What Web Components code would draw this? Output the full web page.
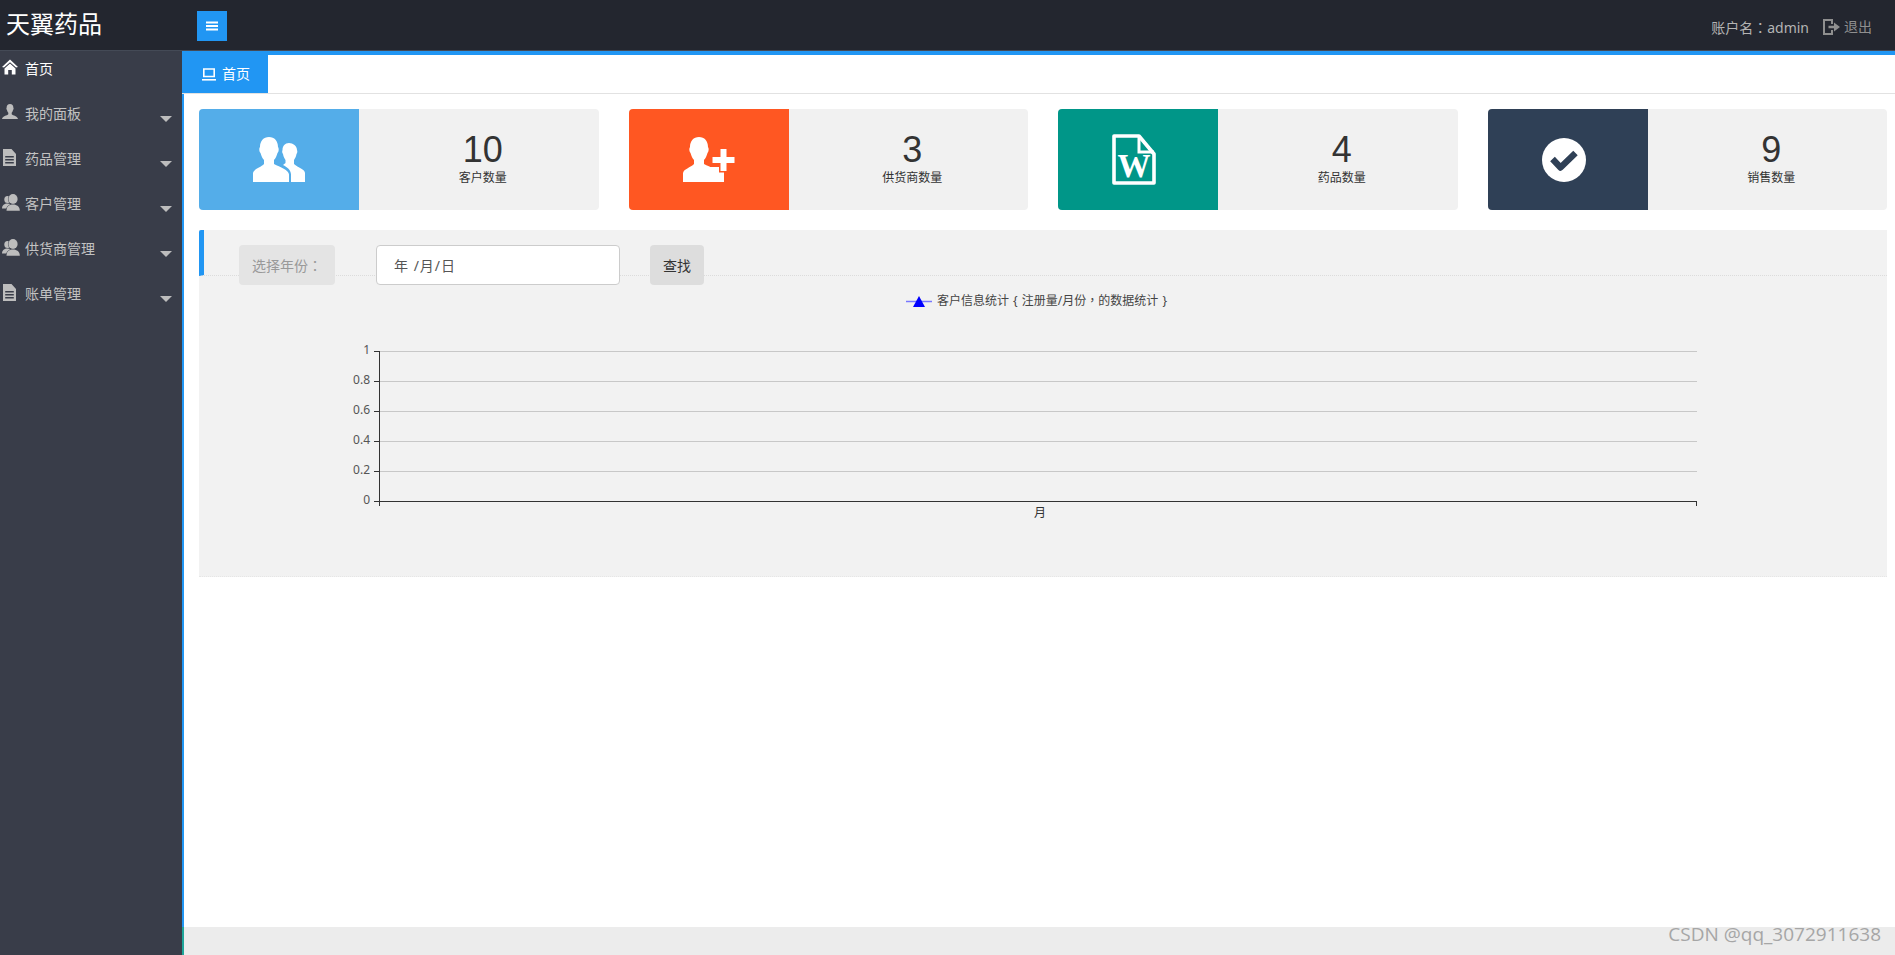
<!DOCTYPE html>
<html lang="zh-CN">
<head>
<meta charset="utf-8">
<title>天翼药品</title>
<style>
	html, body { margin: 0; height: 100%; overflow: hidden; }
	body { font-family: "Noto Sans", "Noto Sans CJK SC", sans-serif; font-size: 14px; color: #333; }
</style>
</head>
<body>

<app-shell>
	<top-bar slot="top" brand="天翼药品" user="账户名"></top-bar>

	<side-item slot="side" icon="home" active>首页</side-item>
	<side-item slot="side" icon="user" arrow>我的面板</side-item>
	<side-item slot="side" icon="doc" arrow>药品管理</side-item>
	<side-item slot="side" icon="users" arrow>客户管理</side-item>
	<side-item slot="side" icon="users" arrow>供货商管理</side-item>
	<side-item slot="side" icon="doc" arrow>账单管理</side-item>

	<tab-strip slot="tabs">首页</tab-strip>

	<stat-grid>
		<stat-card value="10" color="#54ade9" icon="people">客户数量</stat-card>
		<stat-card value="3" color="#ff5722" icon="adduser">供货商数量</stat-card>
		<stat-card value="4" color="#009688" icon="word">药品数量</stat-card>
		<stat-card value="9" color="#2f4056" icon="check">销售数量</stat-card>
	</stat-grid>

	<chart-panel></chart-panel>
</app-shell>

<script>
const sideIcons = {
	home: '<path d="M8 0.5 L16 8 L14 8.5 L8 3.2 L2 8.5 L0 8 Z M8 4.6 L13.5 9.4 V15.5 H9.8 V11 H6.2 V15.5 H2.5 V9.4 Z"/>',
	user: '<path d="M8 0 C5.8 0 4.6 1.6 4.6 3.8 C4.2 4.3 4.4 5.6 5 6 C5.3 7.4 5.8 8.2 6.3 8.8 V10.2 C5 11.6 0.5 12 0 15 H16 C15.5 12 11 11.6 9.7 10.2 V8.8 C10.2 8.2 10.7 7.4 11 6 C11.6 5.6 11.8 4.3 11.4 3.8 C11.4 1.6 10.2 0 8 0 Z"/>',
	doc: '<path fill-rule="evenodd" d="M1 0 H9.5 L14 5 V17 H1 Z M3.2 7 V8.4 H11.8 V7 Z M3.2 10 V11.4 H11.8 V10 Z M3.2 13 V14.4 H11.8 V13 Z"/>',
	users: '<ellipse cx="5.5" cy="5.5" rx="3.2" ry="3.6"/><path d="M0 14.5 C0 11 2.5 9.5 5.5 9.5 C8.5 9.5 10 11 10 14.5 Z"/><g stroke="#393d49" stroke-width="1" paint-order="stroke"><ellipse cx="11" cy="5" rx="4.6" ry="5"/><path d="M4.5 16.8 C4.5 12.5 7 10.4 11 10.4 C15 10.4 17.8 12.5 17.8 16.8 Z"/></g>'
}

const bigPerson = 'M16 0 C10.5 0 7 4 7 10 C6 11 6 14.5 7.5 16 C8.5 19.5 9.5 21.5 11 23 V27 C8 30.5 0 32 0 36.5 V45 H36 V37.5 C36 33 27 30 21 27 V23 C22.5 21.5 23.5 19.5 24.5 16 C26 14.5 26 11 25 10 C25 4 21.5 0 16 0 Z'

const cardIcons = {
	people: `<svg width="52" height="45" viewBox="0 0 52 45" style="margin-top:-1px"><path fill="#fff" d="${bigPerson}"/><path fill="#fff" d="M36 6 C32 6 29.5 9 29.5 13 C29 14 29 16 30 17 C30.5 20 31.5 21.5 32.5 23 V26 L30 28 C34 30 38 33 38 37.5 V45 H52 V36 C52 32 45 31 41 27 V23 C42 21.5 43 20 43.5 17 C44.5 16 44.5 14 44 13 C44 9 40 6 36 6 Z"/></svg>`,
	adduser: `<svg width="52" height="45" viewBox="0 0 52 45" style="margin-top:-1px"><path fill="#fff" d="${bigPerson}"/><path fill="#fff" d="M21 30 H41 V45 H21 Z"/><path fill="#fff" stroke="#ff5722" stroke-width="3" paint-order="stroke" d="M37.5 12 H43.5 V20 H51.5 V26 H43.5 V34 H37.5 V26 H29.5 V20 H37.5 Z"/></svg>`,
	word: `<svg width="44" height="51" viewBox="0 0 44 51" style="margin:-1px 8px 0 0"><path fill="none" stroke="#fff" stroke-width="3.6" stroke-linejoin="round" d="M2 2 H27 L42 20 V49 H2 Z"/><path fill="none" stroke="#fff" stroke-width="3" d="M27 2 V18 H42"/><text x="22" y="43" text-anchor="middle" fill="#fff" font-family="'Liberation Serif', serif" font-weight="700" font-size="33">W</text></svg>`,
	check: `<svg width="44" height="44" viewBox="0 0 44 44" style="margin-right:8px"><circle cx="22" cy="22" r="22" fill="#fff"/><path fill="none" stroke="#2f4056" stroke-width="6.4" stroke-linejoin="round" d="M10.5 21 L18.5 29.5 L33.5 15"/></svg>`
}

// the reference draws full-width punctuation centred, as the TC face does (needs lang too)
const centredPunct = `font-family: "Noto Sans CJK TC", sans-serif;`

class AppShell extends HTMLElement {

	constructor(){

		super()

		this.shadow = this.attachShadow({mode: 'open'})

		this.shadow.innerHTML = `
			<style>
				:host{
					display: grid;
					grid-template-columns: 182px 1fr;
					grid-template-rows: 51px 1fr;
					height: 100vh;
					position: relative;
				}
				#top{ grid-column: 1 / 3; }
				#side{
					background: #393d49;
				}
				#main{
					display: flex;
					flex-direction: column;
					border-left: 2px solid #2196f3;
					min-width: 0;
				}
				#content{
					flex: 1;
					padding: 15px 8px 0 15px;
					display: flex;
					flex-direction: column;
					gap: 20px;
				}
				#foot{
					height: 28px;
					background: #ececec;
					margin-left: -2px;
					border-left: 2px solid #1fa69a;
				}
				#mark{
					position: absolute;
					right: 14px;
					bottom: 9px;
					font: 19px/24px "Open Sans", sans-serif;
					color: #a6a6a6;
				}
			</style>
			<div id="top"><slot name="top"></slot></div>
			<div id="side"><slot name="side"></slot></div>
			<div id="main">
				<slot name="tabs"></slot>
				<div id="content"><slot></slot></div>
				<div id="foot"></div>
			</div>
			<div id="mark">CSDN @qq_3072911638</div>
		`

	}

}

class TopBar extends HTMLElement {

	connectedCallback(){

		this.shadow = this.shadow || this.attachShadow({mode: 'open'})

		this.shadow.innerHTML = `
			<style>
				:host{
					display: flex;
					align-items: center;
					height: 51px;
					box-sizing: border-box;
					background: #23262f;
					border-bottom: 1px solid #444a56;
				}
				#brand{
					width: 197px;
					box-sizing: border-box;
					padding-left: 6px;
					color: #fff;
					font-size: 24px;
					line-height: 30px;
					margin-top: -3px;
				}
				#toggle{
					width: 30px;
					height: 30px;
					background: #2196f3;
					display: flex;
					align-items: center;
					justify-content: center;
					margin-top: 2px;
				}
				#right{
					margin-left: auto;
					display: flex;
					align-items: center;
					padding-right: 23px;
					color: #b4b4b4;
					line-height: 20px;
					margin-top: 4px;
				}
				#logout{
					display: flex;
					align-items: center;
					color: #8f8f8f;
					margin-left: 14px;
					gap: 4px;
				}
				.p{ ${centredPunct} }
			</style>
			<div id="brand">${this.getAttribute('brand')}</div>
			<div id="toggle">
				<svg width="12" height="10" viewBox="0 0 12 10"><path fill="#fff" d="M0 0.5 H12 V2.5 H0 Z M0 4 H12 V6 H0 Z M0 7.5 H12 V9.5 H0 Z"/></svg>
			</div>
			<div id="right">
				<span>${this.getAttribute('user')}<span class="p" lang="zh-TW">：</span>admin</span>
				<div id="logout">
					<svg width="17" height="16" viewBox="0 0 17 16"><path fill="none" stroke="#8f8f8f" stroke-width="2" d="M9 5 V1 H1 V15 H9 V11"/><path fill="#8f8f8f" d="M5.5 6.8 H11 V3.5 L17 8 L11 12.5 V9.2 H5.5 Z"/></svg>
					<span>退出</span>
				</div>
			</div>
		`

	}

}

class SideItem extends HTMLElement {

	get icon() {

		return this.hasAttribute('icon') ? this.getAttribute('icon') : 'doc'

	}

	connectedCallback(){

		this.shadow = this.shadow || this.attachShadow({mode: 'open'})

		const active = this.hasAttribute('active')

		const arrow = this.hasAttribute('arrow') ? '<i id="arrow"></i>' : ''

		const fill = active ? '#fff' : '#bdbdbd'

		this.shadow.innerHTML = `
			<style>
				:host{
					display: flex;
					height: 45px;
					box-sizing: border-box;
					padding-top: 8px;
					color: ${active ? '#fff' : '#c2c2c2'};
					line-height: 20px;
					cursor: default;
				}
				#ico{
					width: 25px;
					height: 20px;
					padding: 0 0 3px 2px;
					box-sizing: border-box;
					display: flex;
					align-items: center;
				}
				#arrow{
					margin: 12px 10px 0 auto;
					width: 0;
					height: 0;
					border-left: 6px solid transparent;
					border-right: 6px solid transparent;
					border-top: 6px solid #bdbdbd;
				}
			</style>
			<div id="ico"><svg width="18" height="17" viewBox="0 0 18 17" fill="${fill}">${sideIcons[this.icon]}</svg></div>
			<slot></slot>
			${arrow}
		`

	}

}

class TabStrip extends HTMLElement {

	constructor(){

		super()

		this.shadow = this.attachShadow({mode: 'open'})

		this.shadow.innerHTML = `
			<style>
				:host{
					display: block;
					border-top: 4px solid #2196f3;
					border-bottom: 1px solid #e2e2e2;
					height: 43px;
					box-sizing: border-box;
					margin-left: -2px;
				}
				#tab{
					width: 86px;
					height: 38px;
					box-sizing: border-box;
					padding-left: 20px;
					background: #2196f3;
					color: #fff;
					display: flex;
					align-items: center;
					gap: 6px;
					line-height: 20px;
				}
			</style>
			<div id="tab">
				<svg width="14" height="13" viewBox="0 0 14 13"><path fill="none" stroke="#fff" stroke-width="1.6" d="M1.8 1 H12.2 V8.5 H1.8 Z"/><path fill="#fff" d="M0 11 H14 V12.6 H0 Z"/></svg>
				<slot></slot>
			</div>
		`

	}

}

class StatGrid extends HTMLElement {

	constructor(){

		super()

		this.shadow = this.attachShadow({mode: 'open'})

		this.shadow.innerHTML = `
			<style>
				:host{
					display: grid;
					grid-template-columns: repeat(4, 1fr);
					column-gap: 30px;
				}
			</style>
			<slot></slot>
		`

	}

}

class StatCard extends HTMLElement {

	connectedCallback(){

		this.shadow = this.shadow || this.attachShadow({mode: 'open'})

		this.shadow.innerHTML = `
			<style>
				:host{
					display: flex;
					height: 101px;
					background: #f1f1f1;
					border-radius: 4px;
					overflow: hidden;
				}
				#icon{
					width: 160px;
					flex: none;
					background: ${this.getAttribute('color')};
					display: flex;
					align-items: center;
					justify-content: center;
				}
				#body{
					flex: 1;
					display: flex;
					flex-direction: column;
					align-items: center;
					padding: 22px 0 0 8px;
				}
				#value{
					font: 36px/38px "Liberation Sans", sans-serif;
					color: #333;
				}
				#label{
					font-size: 12px;
					line-height: 18px;
					color: #333;
				}
			</style>
			<div id="icon">${cardIcons[this.getAttribute('icon')]}</div>
			<div id="body">
				<div id="value">${this.getAttribute('value')}</div>
				<div id="label"><slot></slot></div>
			</div>
		`

	}

}

class ChartPanel extends HTMLElement {

	constructor(){

		super()

		this.shadow = this.attachShadow({mode: 'open'})

		const labels = ['1', '0.8', '0.6', '0.4', '0.2', '0']

		let rows = ''

		labels.forEach((t, i) => {

			const y = 75.5 + i * 30

			if( i < 5 )

				rows += `<line x1="181" x2="1498" y1="${y}" y2="${y}" stroke="#c8c8c8"/>`

			rows += `<line x1="175" x2="181" y1="${y}" y2="${y}" stroke="#333"/>`

			rows += `<text x="171" y="${y + 2}" text-anchor="end" fill="#555" font-size="12">${t}</text>`

		})

		this.shadow.innerHTML = `
			<style>
				:host{
					display: block;
					height: 347px;
					box-sizing: border-box;
					background: #f2f2f2;
					border-bottom: 1px dotted #e6e6e6;
				}
				#head{
					height: 46px;
					box-sizing: border-box;
					border-left: 5px solid #2196f3;
					border-bottom: 1px dotted #dcdcdc;
					border-radius: 2px 0 0 0;
					padding: 15px 0 0 35px;
					display: flex;
					align-items: flex-start;
				}
				#addon, #search, #date{
					height: 40px;
					box-sizing: border-box;
					border-radius: 4px;
					flex: none;
					display: flex;
					align-items: center;
					position: relative;
					z-index: 1;
				}
				#addon{
					width: 96px;
					padding-left: 13px;
					background: #e4e4e4;
					color: #999;
					white-space: nowrap;
				}
				#date{
					width: 244px;
					margin-left: 41px;
					padding-left: 17px;
					background: #fff;
					border: 1px solid #ccc;
					color: #555;
					letter-spacing: 1px;
				}
				#search{
					width: 54px;
					margin-left: 30px;
					justify-content: center;
					background: #ddd;
					color: #333;
				}
				.p{ ${centredPunct} }
				svg{
					display: block;
					font-family: "Noto Sans", "Noto Sans CJK SC", sans-serif;
				}
			</style>
			<div id="head">
				<div id="addon"><span>选择年份<span class="p" lang="zh-TW">：</span></span></div>
				<div id="date">年 /月/日</div>
				<div id="search">查找</div>
			</div>
			<svg width="1688" height="300" viewBox="0 0 1688 300">
				<line x1="707" x2="733" y1="25.5" y2="25.5" stroke="#7878ff" stroke-width="1.5"/>
				<path d="M720 20 L726 31 H714 Z" fill="#0000ff"/>
				<text x="738" y="29" font-size="12" fill="#444" word-spacing="1">客户信息统计 { 注册量/月份<tspan class="p" lang="zh-TW">，</tspan>的数据统计 }</text>
				${rows}
				<line x1="180.5" x2="180.5" y1="75" y2="230" stroke="#333"/>
				<line x1="180" x2="1498" y1="225.5" y2="225.5" stroke="#333"/>
				<line x1="1497.5" x2="1497.5" y1="225" y2="230" stroke="#333"/>
				<text x="841" y="241" text-anchor="middle" font-size="12" fill="#333">月</text>
			</svg>
		`

	}

}

customElements.define('app-shell', AppShell)
customElements.define('top-bar', TopBar)
customElements.define('side-item', SideItem)
customElements.define('tab-strip', TabStrip)
customElements.define('stat-grid', StatGrid)
customElements.define('stat-card', StatCard)
customElements.define('chart-panel', ChartPanel)
</script>

</body>
</html>
